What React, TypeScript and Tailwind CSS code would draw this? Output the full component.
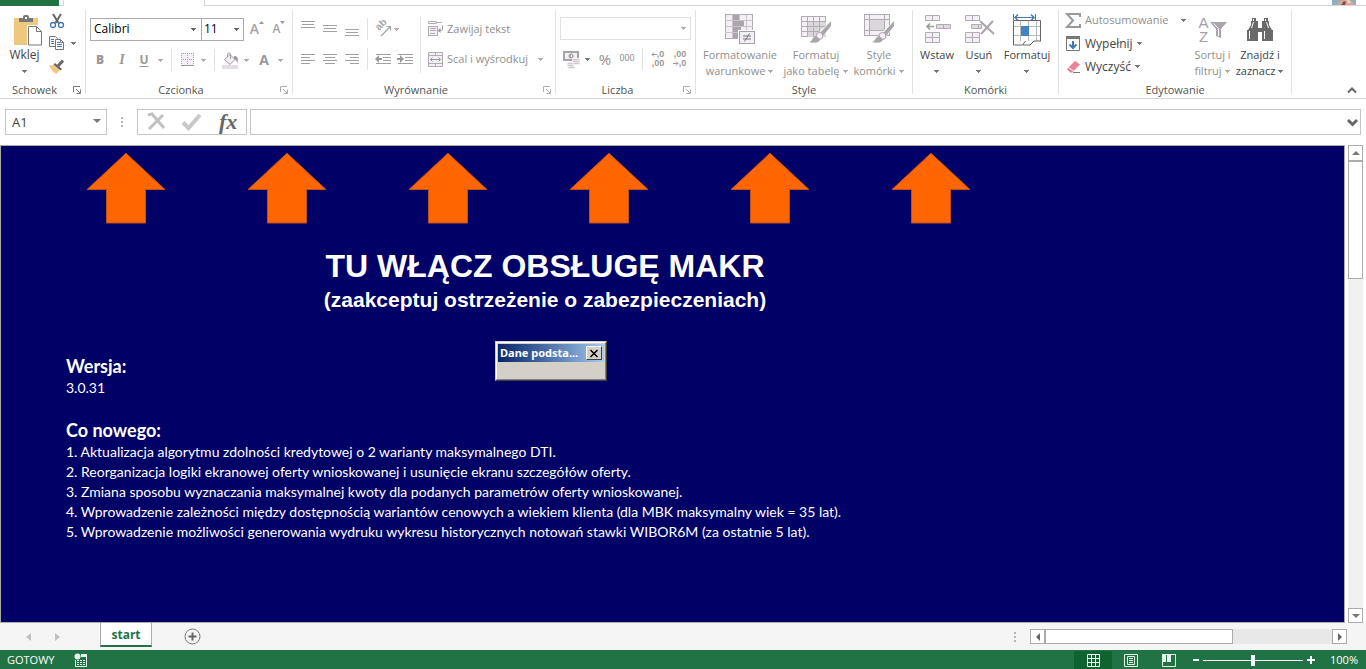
import type { ReactNode } from "react";

const GRAY = "#b1acb1";
const PALE = "#f4eef6";

function Svg({ w, h, children }: { w: number; h: number; children: ReactNode }) {
  return (
    <svg className="shrink-0 overflow-visible" width={w} height={h} viewBox={`0 0 ${w} ${h}`} fill="none" aria-hidden="true">
      {children}
    </svg>
  );
}

function Caret({ color = "#777777" }: { color?: string }) {
  return (
    <Svg w={6} h={3}>
      <path d="M0 0h5v1H4v1H3v1H2V2H1V1H0z" fill={color} shapeRendering="crispEdges" />
    </Svg>
  );
}

function Sep({ tall = false }: { tall?: boolean }) {
  return (
    <span className="flex w-[9px] shrink-0 justify-center">
      <span className={tall ? "h-14 w-px bg-[#e1e1e1]" : "h-[22px] w-px bg-[#e1e1e1]"} />
    </span>
  );
}

function Tool({ label, children }: { label: string; children: ReactNode }) {
  return (
    <button type="button" aria-label={label} className="flex h-6 w-[22px] shrink-0 items-center justify-center">
      {children}
    </button>
  );
}

function Drop({ label, color = "#b1acb1" }: { label: string; color?: string }) {
  return (
    <button type="button" aria-label={label} className="flex h-6 w-3 shrink-0 items-center justify-center">
      <Caret color={color} />
    </button>
  );
}

function Group({ title, launcher, muted, className, children }: {
  title: string;
  launcher?: boolean;
  muted?: boolean;
  className: string;
  children: ReactNode;
}) {
  return (
    <>
      <section className={`flex shrink-0 flex-col ${className}`}>
        <div className="h-[76px]">{children}</div>
        <div className="flex h-4 items-center">
          <h2 className="flex-1 text-center text-[11px] leading-4 text-[#555555]">{title}</h2>
          {launcher && (
            <button type="button" aria-label={`${title} - opcje`} className="flex w-4 items-center pl-1">
              <Svg w={8} h={8}>
                <path d="M.5 6V.5H7M3 3l4 4M7.5 3.5v4h-4" stroke={muted ? GRAY : "#777777"} />
              </Svg>
            </button>
          )}
        </div>
      </section>
      <span className="mt-1 h-[84px] w-px shrink-0 bg-[#e1e1e1]" />
    </>
  );
}

function BigButton({ icon, lines, disabled, className }: {
  icon: ReactNode;
  lines: string[];
  disabled?: boolean;
  className: string;
}) {
  const color = disabled ? "#b1acb1" : "#777777";
  return (
    <button type="button" className={`flex shrink-0 flex-col items-center pt-[6px] text-[11px] ${disabled ? "text-[#8f8f8f]" : "text-[#444444]"} ${className}`}>
      <span className="flex h-[35px] items-center">{icon}</span>
      <span className="h-4 leading-4 whitespace-nowrap">{lines[0]}</span>
      <span className="flex h-4 items-center gap-[3px] leading-4 whitespace-nowrap">
        {lines[1]}
        <Caret color={color} />
      </span>
    </button>
  );
}

function Lines({ rows }: { rows: [number, number, number][] }) {
  return (
    <Svg w={14} h={16}>
      {rows.map(([x, y, w]) => (
        <rect key={y} x={x} y={y} width={w} height="1" fill="#a0a0a0" />
      ))}
    </Svg>
  );
}

const PasteIcon = () => (
  <Svg w={30} h={32}>
    <path d="M2 4h24v27H2z" fill="#edc87e" />
    <path d="M7 8V4h4V3a2 2 0 0 1 2-2h2a2 2 0 0 1 2 2v1h4v4z" fill="#777777" />
    <rect x="13" y="3" width="2" height="2" fill="#fff" />
    <path d="M15 11h10l6 6v16H15z" fill="#fff" />
    <path d="M16.500 12.500h8l5 5v13.500h-13zM24.500 12.500v5h5" fill="#fff" stroke="#777777" />
  </Svg>
);

const CutIcon = () => (
  <Svg w={16} h={16}>
    <path d="M4 1l5.500 9M12 1L6.500 10" stroke="#666666" strokeWidth="2" />
    <circle cx="4" cy="12" r="2.500" stroke="#3f78b5" strokeWidth="1.300" />
    <circle cx="12" cy="12" r="2.500" stroke="#3f78b5" strokeWidth="1.300" />
  </Svg>
);

const CopyIcon = () => (
  <Svg w={16} h={15}>
    <path d="M.5.5h6l2 2v8h-8z" fill="#fff" stroke="#777777" />
    <path d="M2 3.500h3M2 5.500h3M2 7.500h3" stroke="#3f78b5" />
    <path d="M6.500 3.500h5l3 3v7h-8zM11.500 3.500v3h3" fill="#fff" stroke="#777777" />
    <path d="M8 6.500h3M8 8.500h5M8 10.500h5" stroke="#3f78b5" />
  </Svg>
);

const BrushIcon = () => (
  <Svg w={16} h={15}>
    <path d="M0 6.500L6 6l5 5-4 4-3.500-3z" fill="#edc87e" />
    <path d="M6 4l7 6-1.500 1.500-7-6z" fill="#666666" />
    <path d="M9 7l5-5.500" stroke="#666666" strokeWidth="3" />
  </Svg>
);

const BordersIcon = () => (
  <Svg w={13} h={14}>
    <rect width="13" height="13" fill={PALE} />
    <path d="M.5 0v12M6.500 0v12M12.500 0v12M0 .5h13M0 6.500h13" stroke="#a9a0a9" strokeDasharray="1 1" />
    <path d="M0 12.500h13" stroke="#999999" />
  </Svg>
);

const FillIcon = () => (
  <Svg w={17} h={17}>
    <path d="M2.500 7.500L8 2.500l5 5-5 5z" fill={PALE} stroke="#a0a0a0" />
    <path d="M5.500 5V2.500a1.500 1.500 0 0 1 3 0V7" stroke="#a0a0a0" />
    <path d="M12 4c3.500 0 4.500 2 3.500 7-1-2-1-3-3.500-4z" fill="#999999" />
    <rect y="13" width="16" height="4" fill="#e4dde4" />
  </Svg>
);

const OrientIcon = () => (
  <Svg w={16} h={16}>
    <text className="font-['Liberation_Sans',sans-serif]" transform="translate(4 10) rotate(-45)" fontSize="10" fontWeight="700" fill="#a5a5a5">ab</text>
    <path d="M6 15l9-9M11.500 5.500h4v4" stroke="#a5a5a5" strokeWidth="1.200" />
  </Svg>
);

const WrapIcon = () => (
  <Svg w={16} h={16}>
    <rect x=".5" y="5.500" width="9" height="9" fill={PALE} stroke={GRAY} />
    <path d="M.5 2.500V.5h8v2zM8 1.500h6M2 7.500h6M2 9.500h6M2 12.500h5" stroke={GRAY} />
    <path d="M14.500 4.500v3.500c0 1-.5 1.500-2 1.500h-2" stroke="#999999" />
    <path d="M12.500 7l-3 2.500 3 2.500z" fill="#999999" />
  </Svg>
);

const MergeIcon = () => (
  <Svg w={15} h={15}>
    <path d="M.5.5h14v14H.5z" fill={PALE} stroke={GRAY} />
    <path d="M0 3.500h15M0 11.500h15M7.500 0v3M7.500 12v3" stroke={GRAY} />
    <path d="M2 7.500h11M4.500 5.500l-2 2 2 2M10.500 5.500l2 2-2 2" stroke="#999999" />
  </Svg>
);

function IndentIcon({ right }: { right?: boolean }) {
  return (
    <Svg w={16} h={12}>
      <path d="M1 1.500h15M8 4.500h8M8 7.500h8M1 10.500h15" stroke="#a0a0a0" />
      {right ? (
        <path d="M0 5h3V2l4 4-4 4V7H0z" fill="#999999" />
      ) : (
        <path d="M7 5H4V2L0 6l4 4V7h3z" fill="#999999" />
      )}
    </Svg>
  );
}

const MoneyIcon = () => (
  <Svg w={17} h={17}>
    <rect x="1" y="1" width="14" height="8" fill={PALE} stroke="#a5a5a5" strokeWidth="2" />
    <circle cx="8" cy="5" r="2.500" fill="#a5a5a5" />
    <rect x="8" y="4" width="1" height="2" fill="#fff" />
    <path d="M9 7h8v10H4v-6h5z" fill="#fff" />
    <path d="M10 8.500h6M10 10.500h6M11 12.500h5" stroke="#cfc8cf" strokeWidth="1.500" strokeLinecap="round" />
    <path d="M5 12.500h4M5 14.500h5M6 16.500h5" stroke="#cfc8cf" strokeWidth="1.500" strokeLinecap="round" />
  </Svg>
);

function DecimalIcon({ less }: { less?: boolean }) {
  return (
    <span className="relative flex flex-col items-end font-['Liberation_Sans',sans-serif] text-[9px] leading-[9px] font-bold text-[#999999]">
      <span>{less ? ",00" : ",0"}</span>
      <span>{less ? ",0" : ",00"}</span>
      <span className={less ? "absolute bottom-[2px] -left-px" : "absolute top-[2px] -left-px"}>
        <Svg w={6} h={5}>
          {less ? (
            <path d="M0 2.500h5M3 .5l2 2-2 2" stroke="#999999" />
          ) : (
            <path d="M1 2.500h5M3 .5l-2 2 2 2" stroke="#999999" />
          )}
        </Svg>
      </span>
    </span>
  );
}

const ConditionalIcon = () => (
  <Svg w={30} h={31}>
    <rect x=".5" y=".5" width="27" height="24" fill={PALE} stroke={GRAY} />
    <path d="M0 6.500h28M0 12.500h28M0 18.500h28M7.500 0v24M14.500 0v24M21.500 0v24" stroke="#cac3ca" />
    <path d="M8 1h6v5H8zM8 7h11v5H8zM8 13h8v5H8zM8 19h5v5H8z" fill="#aaa5aa" />
    <rect x="13" y="16" width="17" height="15" fill="#fff" />
    <rect x="14.500" y="17.500" width="15" height="12" fill={PALE} stroke="#a5a0a5" />
    <path d="M18 22h8M18 25h8M24.500 19.500l-5 8" stroke="#777777" />
  </Svg>
);

const BrushOverlay = () => (
  <>
    <path d="M30 7v6l-9 11-3 1-4-3z" fill="#fff" />
    <path d="M30 7v5l-8 10-3-3z" fill="#aaa5aa" />
    <circle cx="18.500" cy="22" r="3.500" fill={PALE} stroke="#aaa5aa" />
    <path d="M8 28c4-1 3-5 7-6l4 3c0 3-5 5-11 3z" fill="#aaa5aa" />
  </>
);

const TableIcon = () => (
  <Svg w={30} h={31}>
    <rect x=".5" y="2.500" width="24" height="20" fill={PALE} stroke={GRAY} />
    <path d="M7 8h18v15H7z" fill="#dbd6db" />
    <path d="M0 7.500h25M0 12.500h25M0 17.500h25M6.500 2v21M12.500 2v21M18.500 2v21" stroke={GRAY} />
    <BrushOverlay />
  </Svg>
);

const StyleIcon = () => (
  <Svg w={30} h={31}>
    <rect x=".5" y=".5" width="25" height="21" fill={PALE} stroke={GRAY} />
    <path d="M6 5h15v11H6z" fill="#dbd6db" />
    <path d="M0 5.500h26M0 16.500h26M5.500 0v22M20.500 0v22" stroke={GRAY} />
    <BrushOverlay />
  </Svg>
);

const InsertIcon = () => (
  <Svg w={28} h={29}>
    <path d="M2.500.5h14v5h-14zM9.500.5v5" fill={PALE} stroke={GRAY} />
    <path d="M13.500 9.500h14v4h-14zM20.500 9.500v4" fill="#e0dbe0" stroke={GRAY} />
    <path d="M2.500 17.500h14v10h-14zM9.500 17.500v10M2.500 22.500h14" fill={PALE} stroke={GRAY} />
    <path d="M4 11.500h7M7 8.500l-3 3 3 3" stroke="#999999" strokeWidth="1.600" />
  </Svg>
);

const DeleteIcon = () => (
  <Svg w={30} h={29}>
    <path d="M1.500.5h14v5h-14zM8.500.5v5" fill={PALE} stroke={GRAY} />
    <path d="M7.500 9.500h10v4h-10zM14.500 9.500v4" fill="#e0dbe0" stroke={GRAY} />
    <path d="M1.500 17.500h14v10h-14zM8.500 17.500v10M1.500 22.500h14" fill={PALE} stroke={GRAY} />
    <path d="M16 6l14 13M29 6L17 19" stroke="#aaa5aa" strokeWidth="2" />
  </Svg>
);

const FormatIcon = () => (
  <Svg w={30} h={32}>
    <path d="M1.500 0v6M23.500 0v6M3 3.500h19" stroke="#3f78b5" />
    <path d="M6 .5l-3 3 3 3M19 .5l3 3-3 3" stroke="#3f78b5" strokeWidth="1.500" />
    <rect x="1.500" y="7.500" width="27" height="19" fill="#fff" />
    <path d="M1 12.500h28M1 21.500h28M8.500 7v20M16.500 7v20M24.500 7v20" stroke="#bbbbbb" />
    <path d="M1.500 27V6.500h27V27M1.500 26v5h9l3-4M11 31h7l4-4h7" stroke="#666666" />
    <rect x="9" y="12" width="8" height="10" fill="#4682c4" />
  </Svg>
);

const SortIcon = () => (
  <span className="flex items-center font-['Liberation_Sans',sans-serif] text-[15px] leading-[14px] text-[#a5a0a5]">
    <span className="flex flex-col items-center">
      <span>A</span>
      <span>Z</span>
    </span>
    <Svg w={18} h={18}>
      <path d="M1 1h17l-6 7v9l-5-2V8z" fill="#aaa5aa" />
      <path d="M4.500 2.500l5 5V15" stroke="#fff" />
    </Svg>
  </span>
);

const FindIcon = () => (
  <Svg w={26} h={24}>
    <path d="M5 0h4v3h2v7h4V3h2V0h4v3h1v4l3 5h1v11H15v-9h-4v9H0V12h1l3-5V3h1z" fill="#6a6a6a" />
    <path d="M2.500 13v8M17.500 13v8M6.500 1v2M18.500 1v2M6.500 4l-2 6M19.500 4l2 6M11.500 5v5M14.500 5v5" stroke="#fff" />
  </Svg>
);

function RibbonTop() {
  return (
    <div className="flex h-[6px] shrink-0">
      <span className="w-[59px] bg-[#217346]" />
      <span className="w-[5px] border-r border-b border-[#d5d5d5]" />
      <span className="w-[140px]" />
      <span className="flex flex-1 justify-end border-b border-l border-[#d5d5d5] pr-[10px]">
        <Svg w={24} h={5}>
          <rect width="24" height="5" fill="#8eb0ba" />
          <path d="M5 5l2-4 6-1 5 0 5 5z" fill="#d9a69d" />
          <path d="M9 5l3-4 2 1-1 3z" fill="#8b4a48" />
          <path d="M15 0h2l2 3h-3z" fill="#f0dcd8" />
        </Svg>
      </span>
    </div>
  );
}

function Ribbon() {
  return (
    <div className="flex h-[93px] shrink-0 border-b border-[#d5d5d5]">
      <Group title="Schowek" launcher className="w-[85px]">
        <div className="flex">
          <button type="button" className="flex w-[49px] flex-col items-center pt-[6px] text-[#444444]">
            <span className="flex h-[35px] items-center pl-1"><PasteIcon /></span>
            <span className="h-4 text-xs leading-4">Wklej</span>
            <span className="flex h-4 items-center"><Caret /></span>
          </button>
          <div className="flex flex-col pt-[3px]">
            <button type="button" aria-label="Wytnij" className="flex h-[23px] w-4 items-center"><CutIcon /></button>
            <div className="flex h-[23px] items-center gap-[6px]">
              <button type="button" aria-label="Kopiuj"><CopyIcon /></button>
              <button type="button" aria-label="Opcje kopiowania"><Caret /></button>
            </div>
            <button type="button" aria-label="Malarz formatów" className="flex h-[23px] w-4 items-center"><BrushIcon /></button>
          </div>
        </div>
      </Group>

      <Group title="Czcionka" launcher muted className="w-[206px]">
        <div className="flex items-center pt-[11px] pl-1">
          <div className="relative flex items-center">
            <select aria-label="Czcionka" className="h-[23px] w-[112px] appearance-none border border-[#ababab] bg-white pl-[3px] text-xs text-black">
              <option>Calibri</option>
            </select>
            <span className="pointer-events-none absolute right-[5px]"><Caret color="#666666" /></span>
          </div>
          <div className="relative -ml-px flex items-center">
            <select aria-label="Rozmiar czcionki" className="h-[23px] w-[43px] appearance-none border border-[#ababab] bg-white pl-[2px] text-xs text-black">
              <option>11</option>
            </select>
            <span className="pointer-events-none absolute right-1"><Caret color="#666666" /></span>
          </div>
          <span className="w-[2px]" />
          <Tool label="Zwiększ rozmiar czcionki">
            <span className="flex text-sm leading-6 font-semibold text-[#a5a5a5]">
              A
              <Svg w={5} h={8}><path d="M0 7l2.500-3L5 7z" fill="#999999" /></Svg>
            </span>
          </Tool>
          <Tool label="Zmniejsz rozmiar czcionki">
            <span className="flex text-xs leading-6 font-semibold text-[#a5a5a5]">
              A
              <Svg w={5} h={8}><path d="M0 4h5L2.500 7z" fill="#999999" /></Svg>
            </span>
          </Tool>
        </div>
        <div className="flex items-center pt-[7px] pl-[3px] text-[#999999]">
          <Tool label="Pogrubienie"><span className="text-xs font-extrabold">B</span></Tool>
          <Tool label="Kursywa"><span className="font-['Liberation_Serif',serif] text-sm leading-5 font-bold italic">I</span></Tool>
          <Tool label="Podkreślenie"><span className="text-xs font-bold underline underline-offset-2">U</span></Tool>
          <Drop label="Opcje podkreślenia" />
          <Sep />
          <Tool label="Obramowanie"><BordersIcon /></Tool>
          <Drop label="Opcje obramowania" />
          <Sep />
          <Tool label="Kolor wypełnienia"><FillIcon /></Tool>
          <Drop label="Opcje wypełnienia" />
          <Tool label="Kolor czcionki"><span className="text-sm font-bold">A</span></Tool>
          <Drop label="Opcje koloru czcionki" />
        </div>
      </Group>

      <Group title="Wyrównanie" launcher muted className="w-[262px]">
        <div className="flex pt-[11px] pl-1">
          <div className="flex flex-col gap-[6px]">
            <div className="flex h-6 items-center">
              <Tool label="Wyrównaj do góry"><Lines rows={[[0, 0, 14], [1, 3, 12], [0, 6, 14]]} /></Tool>
              <Tool label="Wyrównaj do środka w pionie"><Lines rows={[[0, 4, 14], [1, 7, 12], [0, 10, 14]]} /></Tool>
              <Tool label="Wyrównaj do dołu"><Lines rows={[[0, 8, 14], [1, 11, 12], [0, 14, 14]]} /></Tool>
              <Sep />
              <Tool label="Orientacja"><OrientIcon /></Tool>
              <Caret color={GRAY} />
            </div>
            <div className="flex h-6 items-center">
              <Tool label="Wyrównaj do lewej"><Lines rows={[[0, 3, 14], [0, 6, 9], [0, 9, 14], [0, 12, 9]]} /></Tool>
              <Tool label="Wyśrodkuj"><Lines rows={[[0, 3, 14], [2, 6, 10], [0, 9, 14], [2, 12, 10]]} /></Tool>
              <Tool label="Wyrównaj do prawej"><Lines rows={[[0, 3, 14], [5, 6, 9], [0, 9, 14], [5, 12, 9]]} /></Tool>
              <Sep />
              <Tool label="Zmniejsz wcięcie"><IndentIcon /></Tool>
              <Tool label="Zwiększ wcięcie"><IndentIcon right /></Tool>
            </div>
          </div>
          <Sep tall />
          <div className="flex flex-col gap-[6px] pl-[3px] text-[11px] text-[#8f8f8f]">
            <button type="button" className="flex h-6 items-center gap-[3px]"><WrapIcon />Zawijaj tekst</button>
            <div className="flex items-center gap-[7px]">
              <button type="button" className="flex h-6 items-center gap-1 whitespace-nowrap"><MergeIcon />Scal i wyśrodkuj</button>
              <Drop label="Opcje scalania" />
            </div>
          </div>
        </div>
      </Group>

      <Group title="Liczba" launcher muted className="w-[139px]">
        <div className="flex pt-[11px] pl-1">
          <div className="relative flex items-center">
            <select aria-label="Format liczb" className="h-[23px] w-[131px] appearance-none border border-[#e1e1e1] bg-white text-xs">
              <option></option>
            </select>
            <span className="pointer-events-none absolute right-1"><Caret color={GRAY} /></span>
          </div>
        </div>
        <div className="flex items-center pt-[7px] pl-1 text-[#8f8f8f]">
          <Tool label="Format księgowy"><MoneyIcon /></Tool>
          <Drop label="Opcje waluty" color="#777777" />
          <Tool label="Zapis procentowy"><span className="text-[15px] leading-6">%</span></Tool>
          <Tool label="Zapis dziesiętny"><span className="font-['Roboto',sans-serif] text-[9px]">000</span></Tool>
          <Sep />
          <Tool label="Zwiększ dziesiętne"><DecimalIcon /></Tool>
          <Tool label="Zmniejsz dziesiętne"><DecimalIcon less /></Tool>
        </div>
      </Group>

      <Group title="Style" className="w-[216px]">
        <div className="flex pl-[2px]">
          <BigButton disabled icon={<ConditionalIcon />} lines={["Formatowanie", "warunkowe"]} className="w-[84px]" />
          <BigButton disabled icon={<TableIcon />} lines={["Formatuj", "jako tabelę"]} className="w-[68px]" />
          <BigButton disabled icon={<StyleIcon />} lines={["Style", "komórki"]} className="w-[58px]" />
        </div>
      </Group>

      <Group title="Komórki" className="w-[145px]">
        <div className="flex pl-[3px]">
          <BigButton icon={<InsertIcon />} lines={["Wstaw"]} className="w-[42px]" />
          <BigButton icon={<DeleteIcon />} lines={["Usuń"]} className="w-[42px]" />
          <BigButton icon={<FormatIcon />} lines={["Formatuj"]} className="w-[54px]" />
        </div>
      </Group>

      <Group title="Edytowanie" className="w-[232px]">
        <div className="flex">
          <div className="flex w-[131px] flex-col pt-[3px] pl-[7px] text-xs text-[#444444]">
            <div className="flex h-[23px] items-center">
              <button type="button" className="flex flex-1 items-center gap-1 text-[11px] text-[#8f8f8f]">
                <Svg w={15} h={15}><path d="M14 4V1H1l6 6.500L1 14h13v-3" stroke="#999999" strokeWidth="2" /></Svg>
                Autosumowanie
              </button>
              <Drop label="Opcje autosumowania" color="#777777" />
            </div>
            <button type="button" className="flex h-[23px] items-center gap-1">
              <Svg w={15} h={16}>
                <path d="M.5.5h13v14H.5z" fill="#fff" stroke="#777777" />
                <path d="M0 0h14v3H0z" fill="#777777" />
                <path d="M7 5v7M3.500 8.500L7 12l3.500-3.500" stroke="#3f78b5" strokeWidth="2" />
              </Svg>
              Wypełnij
              <Caret />
            </button>
            <button type="button" className="flex h-[23px] items-center gap-1">
              <Svg w={15} h={14}>
                <path d="M1 9l8-8 5 3.500-8 8H4z" fill="#e8839b" />
                <path d="M2.500 7.500l5 3.500" stroke="#fff" />
                <path d="M7 12.500h7" stroke="#777777" />
              </Svg>
              Wyczyść
              <Caret />
            </button>
          </div>
          <BigButton disabled icon={<SortIcon />} lines={["Sortuj i", "filtruj"]} className="w-[45px]" />
          <BigButton icon={<FindIcon />} lines={["Znajdź i", "zaznacz"]} className="w-[50px]" />
        </div>
      </Group>

      <div className="flex flex-1 items-end justify-end pr-[9px] pb-1">
        <button type="button" aria-label="Zwiń wstążkę">
          <Svg w={10} h={8}><path d="M1 6.500l4-4 4 4" stroke="#666666" strokeWidth="2" /></Svg>
        </button>
      </div>
    </div>
  );
}

function Dots() {
  return (
    <Svg w={2} h={10}>
      <path d="M0 0h2v2H0zM0 4h2v2H0zM0 8h2v2H0z" fill="#b5b5b5" />
    </Svg>
  );
}

function FormulaBar() {
  return (
    <div className="flex h-[46px] shrink-0 items-center pr-[5px] pl-[5px]">
      <div className="relative flex items-center">
        <input aria-label="Pole nazwy" defaultValue="A1" className="h-[26px] w-[102px] border border-[#c6c6c6] bg-white pl-[6px] text-[13px] text-[#444444] outline-none" />
        <span className="absolute right-[6px] -mt-[3px]">
          <Svg w={8} h={4}><path d="M0 0h8L4 4z" fill="#777777" /></Svg>
        </span>
      </div>
      <span className="flex w-[30px] justify-center"><Dots /></span>
      <div className="flex h-[26px] w-[110px] items-center justify-around border border-[#c6c6c6]">
        <button type="button" aria-label="Anuluj">
          <Svg w={18} h={18}><path d="M1 2l4-1 12 14M16 2L2 16" stroke="#c2c2c2" strokeWidth="3" /></Svg>
        </button>
        <button type="button" aria-label="Wpis">
          <Svg w={20} h={18}><path d="M1 9.500l5.500 5.500L18 2" stroke="#c8c8c8" strokeWidth="4" /></Svg>
        </button>
        <button type="button" aria-label="Wstaw funkcję" className="font-['Liberation_Serif',serif] text-[22px] leading-6 font-bold text-[#666666] italic">
          fx
        </button>
      </div>
      <div className="relative ml-[3px] flex flex-1 items-center">
        <input aria-label="Pasek formuły" className="h-[26px] w-full border border-[#c6c6c6] bg-white px-2 text-xs outline-none" />
        <span className="absolute right-[3px]">
          <Svg w={11} h={8}><path d="M1 2l4.500 4.500L10 2" stroke="#666666" strokeWidth="3" /></Svg>
        </span>
      </div>
    </div>
  );
}

const news = [
  "1. Aktualizacja algorytmu zdolności kredytowej o 2 warianty maksymalnego DTI.",
  "2. Reorganizacja logiki ekranowej oferty wnioskowanej i usunięcie ekranu szczegółów oferty.",
  "3. Zmiana sposobu wyznaczania maksymalnej kwoty dla podanych parametrów oferty wnioskowanej.",
  "4. Wprowadzenie zależności między dostępnością wariantów cenowych a wiekiem klienta (dla MBK maksymalny wiek = 35 lat).",
  "5. Wprowadzenie możliwości generowania wydruku wykresu historycznych notowań stawki WIBOR6M (za ostatnie 5 lat).",
];

function Sheet() {
  return (
    <main className="relative flex-1 overflow-hidden border border-[#ababab] bg-[#000066] text-white">
      <div className="flex gap-[81px] pt-[6px] pl-[85px]">
        {[0, 1, 2, 3, 4, 5].map((i) => (
          <Svg key={i} w={80} h={72}>
            <path d="M40 1.200l39 36.300H59.500v33.500h-39V37.500H1z" fill="#ff6600" stroke="#c0501a" />
          </Svg>
        ))}
      </div>
      <div className="w-[1088px] pt-[22px] text-center font-['Liberation_Sans',Arial,sans-serif] font-bold">
        <h1 className="text-[32px] leading-10">TU WŁĄCZ OBSŁUGĘ MAKR</h1>
        <p className="text-[21px] leading-7">(zaakceptuj ostrzeżenie o zabezpieczeniach)</p>
      </div>
      <div className="pt-10 pl-[65px] font-['Lato',sans-serif] text-sm leading-5">
        <h2 className="text-lg leading-6 font-bold">Wersja:</h2>
        <p>3.0.31</p>
        <h2 className="pt-5 text-lg leading-6 font-bold">Co nowego:</h2>
        {news.map((n) => (
          <p key={n} className="whitespace-nowrap">{n}</p>
        ))}
      </div>

      {/* floating form window */}
      <div role="dialog" aria-label="Dane podstawowe" className="absolute top-[195px] left-[494px] h-10 w-28 border border-t-[#d4d0c8] border-r-[#404040] border-b-[#404040] border-l-[#d4d0c8] bg-[#d4d0c8]">
        <div className="h-full border border-t-white border-r-[#808080] border-b-[#808080] border-l-white p-px">
          <div className="flex h-[18px] items-center justify-between bg-linear-to-r from-[#0a246a] to-[#a6caf0] pr-[2px] pl-[2px]">
            <span className="font-['Noto_Sans',sans-serif] text-[11px] font-bold whitespace-nowrap">Dane podsta...</span>
            <button type="button" aria-label="Zamknij" className="flex h-[14px] w-4 items-center justify-center border border-t-white border-r-[#404040] border-b-[#404040] border-l-white bg-[#d4d0c8]">
              <Svg w={8} h={7}><path d="M.5 0l7 7M7.500 0l-7 7" stroke="#000" strokeWidth="1.500" /></Svg>
            </button>
          </div>
        </div>
      </div>
    </main>
  );
}

function VerticalScroll() {
  return (
    <div className="flex w-[21px] shrink-0 flex-col items-center">
      <div className="flex w-[15px] flex-1 flex-col bg-[#f0f0f0]">
        <button type="button" aria-label="W górę" className="flex h-4 items-center justify-center border border-[#ababab] bg-white">
          <Svg w={8} h={4}><path d="M0 4h8L4 0z" fill="#777777" /></Svg>
        </button>
        <span className="h-[118px] border border-[#ababab] bg-white" />
        <span className="flex-1" />
        <button type="button" aria-label="W dół" className="flex h-[15px] items-center justify-center border border-[#ababab] bg-white">
          <Svg w={8} h={4}><path d="M0 0h8L4 4z" fill="#777777" /></Svg>
        </button>
      </div>
    </div>
  );
}

function TabBar() {
  return (
    <div className="flex h-[27px] shrink-0 bg-[#f5f5f5] pr-[19px]">
      <div className="flex w-[100px] items-center gap-6 pl-[26px]">
        <button type="button" aria-label="Poprzedni arkusz"><Svg w={5} h={8}><path d="M5 0v8L0 4z" fill="#c0c0c0" /></Svg></button>
        <button type="button" aria-label="Następny arkusz"><Svg w={5} h={8}><path d="M0 0v8l5-4z" fill="#c0c0c0" /></Svg></button>
      </div>
      <button type="button" className="-mt-px h-[25px] w-[52px] border-x border-b-2 border-x-[#ababab] border-b-[#217346] bg-white pt-[3px] text-xs font-bold text-[#217346]">
        start
      </button>
      <button type="button" aria-label="Nowy arkusz" className="ml-8">
        <Svg w={17} h={17}>
          <circle cx="8.500" cy="8.500" r="7.500" stroke="#777777" />
          <path d="M8.500 4.500v8M4.500 8.500h8" stroke="#666666" strokeWidth="2" />
        </Svg>
      </button>
      <div className="flex flex-1 items-center justify-end">
        <span className="pr-[14px]"><Dots /></span>
        <div className="flex h-[15px] w-[317px] bg-[#e8e8e8]">
          <button type="button" aria-label="W lewo" className="flex w-[15px] items-center justify-center border border-[#ababab] bg-white">
            <Svg w={4} h={8}><path d="M4 0v8L0 4z" fill="#666666" /></Svg>
          </button>
          <span className="w-[188px] border border-[#ababab] bg-white" />
          <span className="flex-1" />
          <button type="button" aria-label="W prawo" className="flex w-[15px] items-center justify-center border border-[#ababab] bg-white">
            <Svg w={4} h={8}><path d="M0 0v8l4-4z" fill="#666666" /></Svg>
          </button>
        </div>
      </div>
    </div>
  );
}

function StatusBar() {
  return (
    <footer className="flex h-[19px] shrink-0 items-center bg-[#217346] pt-px pr-2 pl-[7px] text-[11px] text-white">
      <span className="w-[67px]">GOTOWY</span>
      <button type="button" aria-label="Rejestruj makro">
        <Svg w={13} h={14}>
          <path d="M7.500 1.500h5v12h-11V7" stroke="#e3f1e8" />
          <path d="M7 1h6v3H7z" fill="#e3f1e8" />
          <circle cx="3.500" cy="3.500" r="3" fill="#e3f1e8" />
          <path d="M3 7.500h2M6 7.500h2M9 7.500h2M3 9.500h2M6 9.500h2M9 9.500h2M3 11.500h2M6 11.500h2M9 11.500h2" stroke="#e3f1e8" />
        </Svg>
      </button>
      <span className="flex-1" />
      <button type="button" aria-label="Normalny" className="flex h-full w-[38px] items-center justify-center bg-[#0f6331]">
        <Svg w={13} h={13}><path d="M.5.5h12v12H.5zM0 4.500h13M0 8.500h13M4.500 0v13M8.500 0v13" stroke="#fff" /></Svg>
      </button>
      <button type="button" aria-label="Układ strony" className="flex h-full w-[38px] items-center justify-center">
        <Svg w={14} h={13}>
          <path d="M.5.5h13v12H.5zM3.500 2.500h7v8h-7zM5 4.500h4M5 6.500h4M5 8.500h4" stroke="#e3f1e8" />
        </Svg>
      </button>
      <button type="button" aria-label="Podgląd podziału stron" className="flex h-full w-[38px] items-center justify-center">
        <Svg w={14} h={13}>
          <path d="M.5.5h13v12H.5z" stroke="#e3f1e8" />
          <path d="M0 0h4v8H0zM5 0h4v8H5z" fill="#e3f1e8" />
        </Svg>
      </button>
      <button type="button" aria-label="Pomniejsz" className="ml-[5px]"><Svg w={6} h={10}><path d="M0 5h6" stroke="#fff" strokeWidth="2" /></Svg></button>
      <input
        type="range"
        aria-label="Powiększenie"
        defaultValue={50}
        className="mx-1 h-3 w-[100px] appearance-none bg-[linear-gradient(#fff,#fff)] bg-[length:100%_1px] bg-center bg-no-repeat [&::-webkit-slider-thumb]:h-[11px] [&::-webkit-slider-thumb]:w-1 [&::-webkit-slider-thumb]:appearance-none [&::-webkit-slider-thumb]:bg-white"
      />
      <button type="button" aria-label="Powiększ"><Svg w={8} h={8}><path d="M4 0v8M0 4h8" stroke="#fff" strokeWidth="2" /></Svg></button>
      <span className="w-[43px] text-right">100%</span>
    </footer>
  );
}

export default function App() {
  return (
    <div className="flex h-screen flex-col overflow-hidden bg-white font-['Open_Sans','Noto_Sans',sans-serif]">
      <RibbonTop />
      <Ribbon />
      <FormulaBar />
      <div className="flex min-h-0 flex-1">
        <Sheet />
        <VerticalScroll />
      </div>
      <TabBar />
      <StatusBar />
    </div>
  );
}
